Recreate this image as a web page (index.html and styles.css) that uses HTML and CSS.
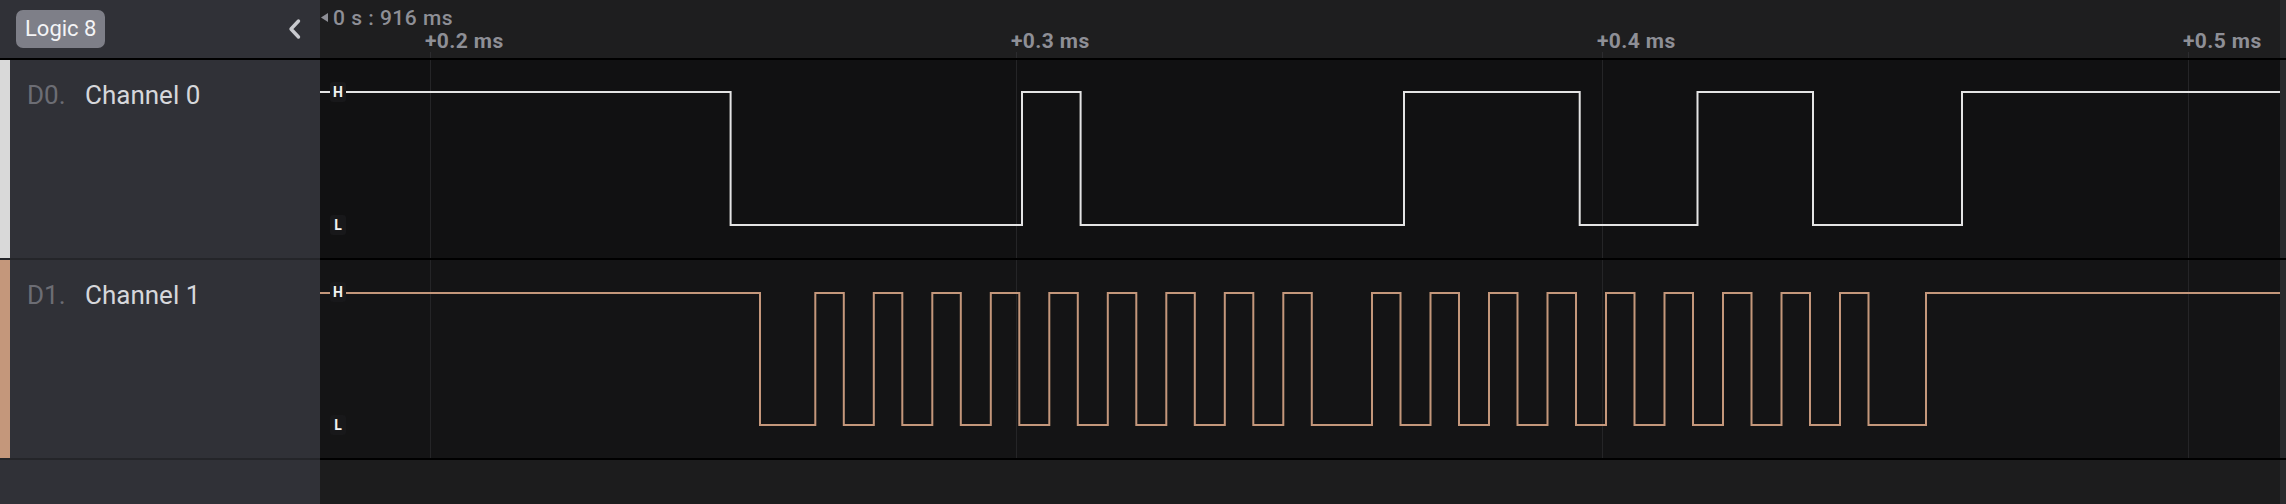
FILE: index.html
```html
<!DOCTYPE html>
<html>
<head>
<meta charset="utf-8">
<link rel="stylesheet" href="styles.css">
</head>
<body>
<div class="app">
  <div class="row head">
    <div class="side side-head">
      <span class="badge">Logic 8</span>
      <svg class="chev" width="16" height="24" viewBox="0 0 16 24"><polyline points="12.5,4 5,12 12.5,20" fill="none" stroke="#c9cacf" stroke-width="3.4" stroke-linecap="round" stroke-linejoin="round"/></svg>
    </div>
    <div class="wave wave-head">
      <div class="stamp"><svg class="tri" width="7" height="9" viewBox="0 0 7 9"><polygon points="7,0 0,4.5 7,9" fill="#8e8f96"/></svg><span>0 s : 916 ms</span></div>
      <div class="tick" style="left:110px"><span class="tick-label">+0.2 ms</span></div>
      <div class="tick" style="left:696px"><span class="tick-label">+0.3 ms</span></div>
      <div class="tick" style="left:1282px"><span class="tick-label">+0.4 ms</span></div>
      <div class="tick" style="left:1868px"><span class="tick-label">+0.5 ms</span></div>
    </div>
    <div class="strip"></div>
  </div>

  <div class="row chan ch0">
    <div class="side">
      <div class="color"></div>
      <span class="dn">D0.</span>
      <span class="name">Channel 0</span>
    </div>
    <div class="wave">
      <svg class="plot" width="1960" height="198" viewBox="0 0 1960 198">
        <g stroke="#252527" stroke-width="1">
          <line x1="110.5" y1="0" x2="110.5" y2="198"/>
          <line x1="696.5" y1="0" x2="696.5" y2="198"/>
          <line x1="1282.5" y1="0" x2="1282.5" y2="198"/>
          <line x1="1868.5" y1="0" x2="1868.5" y2="198"/>
        </g>
        <path d="M0 32 H410.6 V165 H702 V32 H760.6 V165 H1084 V32 H1259.7 V165 H1377.5 V32 H1493 V165 H1642 V32 H1960" fill="none" stroke="#e4e4e4" stroke-width="2"/>
      </svg>
      <span class="lvl lvl-h">H</span>
      <span class="lvl lvl-l">L</span>
    </div>
    <div class="strip"></div>
  </div>

  <div class="row chan ch1">
    <div class="side">
      <div class="color"></div>
      <span class="dn">D1.</span>
      <span class="name">Channel 1</span>
    </div>
    <div class="wave">
      <svg class="plot" width="1960" height="198" viewBox="0 0 1960 198">
        <g stroke="#252527" stroke-width="1">
          <line x1="110.5" y1="0" x2="110.5" y2="198"/>
          <line x1="696.5" y1="0" x2="696.5" y2="198"/>
          <line x1="1282.5" y1="0" x2="1282.5" y2="198"/>
          <line x1="1868.5" y1="0" x2="1868.5" y2="198"/>
        </g>
        <path d="M0 33 H440 V165 H495.3 V33 H523.8 V165 H553.8 V33 H582.3 V165 H612.3 V33 H640.8 V165 H670.8 V33 H699.3 V165 H729.3 V33 H757.8 V165 H787.8 V33 H816.3 V165 H846.3 V33 H874.8 V165 H904.8 V33 H933.3 V165 H963.3 V33 H991.8 V165 H1052 V33 H1080.5 V165 H1110.5 V33 H1139 V165 H1169 V33 H1197.5 V165 H1227.5 V33 H1256 V165 H1286 V33 H1314.5 V165 H1344.5 V33 H1373 V165 H1403 V33 H1431.5 V165 H1461.5 V33 H1490 V165 H1520 V33 H1548.5 V165 H1606 V33 H1960" fill="none" stroke="#c4977b" stroke-width="2"/>
      </svg>
      <span class="lvl lvl-h">H</span>
      <span class="lvl lvl-l">L</span>
    </div>
    <div class="strip"></div>
  </div>

  <div class="row foot">
    <div class="side"></div>
    <div class="wave wave-foot"></div>
    <div class="strip"></div>
  </div>
</div>
</body>
</html>
```

FILE: styles.css
```css
* { box-sizing: border-box; }
html, body { margin: 0; padding: 0; }
body {
  width: 2286px;
  height: 504px;
  overflow: hidden;
  background: #1c1c1d;
  font-family: Roboto, "Liberation Sans", sans-serif;
}
.app {
  display: flex;
  flex-direction: column;
  height: 504px;
}
.row {
  display: flex;
}
.side {
  width: 320px;
  flex: none;
  background: #303137;
}
.wave {
  flex: 1;
  position: relative;
}
.strip {
  width: 6px;
  flex: none;
  background: #2a2a2d;
}

/* header */
.head {
  height: 60px;
  border-bottom: 2px solid #000;
}
.side-head {
  display: flex;
  align-items: center;
  padding-left: 16px;
  padding-right: 18px;
  padding-bottom: 1px;
}
.badge {
  height: 38px;
  line-height: 38px;
  padding: 0 9px;
  background: #7e7f88;
  color: #f4f4f6;
  border-radius: 7px;
  font-size: 22px;
}
.chev {
  margin-left: auto;
  display: block;
}
.wave-head {
  background: #1e1e1f;
}
.stamp {
  display: flex;
  align-items: center;
  padding-top: 6px;
  padding-left: 1px;
  color: #8e8f96;
  font-size: 21px;
  line-height: 24px;
  font-weight: 500;
  letter-spacing: 0.5px;
}
.tri {
  display: block;
  margin-right: 5px;
  margin-top: -1px;
}
.tick {
  position: absolute;
  top: 0;
  height: 58px;
  width: 1px;
}
.tick::after {
  content: "";
  position: absolute;
  left: 0;
  top: 52px;
  width: 1px;
  height: 6px;
  background: #2c2c2f;
}
.tick-label {
  position: absolute;
  left: -5px;
  top: 29px;
  white-space: nowrap;
  color: #8e8f96;
  font-size: 21px;
  line-height: 24px;
  font-weight: 700;
  letter-spacing: 0.4px;
}

/* channel rows */
.chan {
  height: 200px;
}
.chan .side {
  display: flex;
  align-items: flex-start;
  border-bottom: 2px solid #242529;
}
.chan .wave {
  border-bottom: 2px solid #000;
}
.chan .strip {
  border-bottom: 2px solid #000;
}
.color {
  width: 10px;
  height: 198px;
  flex: none;
}
.ch0 .color { background: #d9d9d9; }
.ch1 .color { background: #c4977b; }
.ch0 .wave { background: #111112; }
.ch1 .wave { background: #141415; }
.dn {
  width: 58px;
  margin-left: 17px;
  padding-top: 20px;
  font-size: 26px;
  line-height: 30px;
  color: #6c6d74;
}
.name {
  padding-top: 20px;
  font-size: 26px;
  line-height: 30px;
  color: #d6d7db;
}
.plot {
  display: block;
}
.lvl {
  position: absolute;
  left: 10px;
  width: 16px;
  height: 20px;
  line-height: 20px;
  text-align: center;
  background: #18181a;
  border-radius: 3px;
  color: #f2f2f2;
  font-size: 14px;
  font-weight: 700;
}
.lvl-h { top: 22px; }
.lvl-l { top: 155px; }

/* footer */
.foot {
  flex: 1;
}
.wave-foot {
  background: #1c1c1d;
}
```
